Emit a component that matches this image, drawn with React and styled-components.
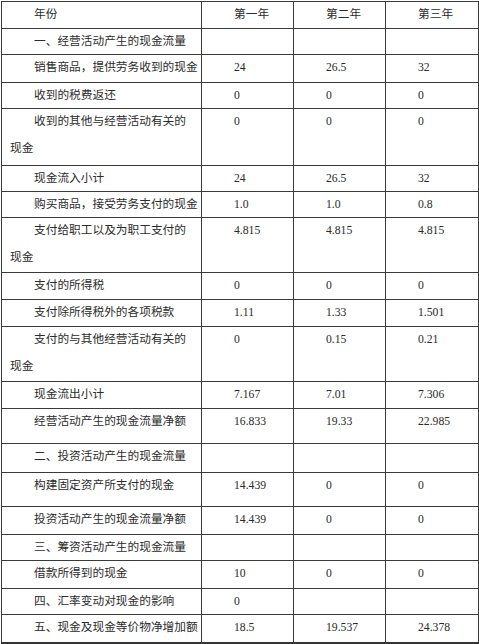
import React from 'react';
import styled, { createGlobalStyle } from 'styled-components';

const Global = createGlobalStyle`
    html, body {
        margin: 0;
        padding: 0;
        background: #fff;
    }
    body {
        font-family: "Liberation Serif", "Noto Sans CJK SC", serif;
        color: #2b2b2b;
    }
`;

const Table = styled.table`
    margin: 1px 0 0 1px;
    width: 477px;
    border-collapse: collapse;
    table-layout: fixed;
    border-bottom: 2px solid #333;
`;

const Col = styled.col`
    width: ${props => props.$w}px;
`;

const Cell = styled.td`
    box-sizing: border-box;
    height: ${props => props.$h}px;
    padding: 1px 4px 0 8px;
    border: 1px solid #3a3a3a;
    vertical-align: top;
    font-size: 11.7px;
    line-height: 24px;
    white-space: nowrap;
    overflow: hidden;
`;

const Line = styled.div`
    padding-left: ${props => (props.$indent ? 24 : 0)}px;
    & + & {
        margin-top: 3px;
    }
`;

const rows = [
    { label: ['年份'], values: ['第一年', '第二年', '第三年'], h: 27 },
    { label: ['一、经营活动产生的现金流量'], values: ['', '', ''], h: 26 },
    { label: ['销售商品，提供劳务收到的现金'], values: ['24', '26.5', '32'], h: 28 },
    { label: ['收到的税费返还'], values: ['0', '0', '0'], h: 26 },
    { label: ['收到的其他与经营活动有关的', '现金'], values: ['0', '0', '0'], h: 57 },
    { label: ['现金流入小计'], values: ['24', '26.5', '32'], h: 26 },
    { label: ['购买商品，接受劳务支付的现金'], values: ['1.0', '1.0', '0.8'], h: 25 },
    { label: ['支付给职工以及为职工支付的', '现金'], values: ['4.815', '4.815', '4.815'], h: 55 },
    { label: ['支付的所得税'], values: ['0', '0', '0'], h: 27 },
    { label: ['支付除所得税外的各项税款'], values: ['1.11', '1.33', '1.501'], h: 27 },
    { label: ['支付的与其他经营活动有关的', '现金'], values: ['0', '0.15', '0.21'], h: 55 },
    { label: ['现金流出小计'], values: ['7.167', '7.01', '7.306'], h: 27 },
    { label: ['经营活动产生的现金流量净额'], values: ['16.833', '19.33', '22.985'], h: 35 },
    { label: ['二、投资活动产生的现金流量'], values: ['', '', ''], h: 29 },
    { label: ['构建固定资产所支付的现金'], values: ['14.439', '0', '0'], h: 34 },
    { label: ['投资活动产生的现金流量净额'], values: ['14.439', '0', '0'], h: 28 },
    { label: ['三、筹资活动产生的现金流量'], values: ['', '', ''], h: 26 },
    { label: ['借款所得到的现金'], values: ['10', '0', '0'], h: 28 },
    { label: ['四、汇率变动对现金的影响'], values: ['0', '', ''], h: 26 },
    { label: ['五、现金及现金等价物净增加额'], values: ['18.5', '19.537', '24.378'], h: 28 },
];

export default function App() {
    return (
        <>
            <Global />
            <Table>
                <colgroup>
                    <Col $w={200} />
                    <Col $w={92} />
                    <Col $w={92} />
                    <Col $w={93} />
                </colgroup>
                <tbody>
                    {rows.map(row => (
                        <tr key={row.label.join('')}>
                            <Cell $h={row.h}>
                                {row.label.map((text, i) => (
                                    <Line $indent={i === 0} key={text}>
                                        {text}
                                    </Line>
                                ))}
                            </Cell>
                            {row.values.map((value, i) => (
                                <Cell $h={row.h} key={i}>
                                    <Line $indent>{value}</Line>
                                </Cell>
                            ))}
                        </tr>
                    ))}
                </tbody>
            </Table>
        </>
    );
}
